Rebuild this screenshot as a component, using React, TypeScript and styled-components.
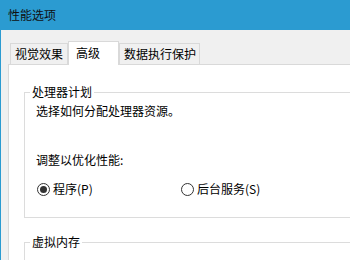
import React from "react";
import styled, { createGlobalStyle } from "styled-components";

const Global = createGlobalStyle`
  html, body { margin: 0; padding: 0; overflow: hidden; background: #f0f0f0; }
  body { font-family: "Noto Sans CJK SC", "Noto Sans", sans-serif; font-size: 12px; color: #000; }
`;

const Window = styled.div`
  width: 100%;
  height: 260px;
  overflow: hidden;
  border-left: 1px solid #2b9bd1;
  background: #f0f0f0;
  display: flex;
  flex-direction: column;
  box-sizing: border-box;
`;

const TitleBar = styled.div`
  flex: none;
  height: 30px;
  background: #2b9bd1;
  display: flex;
  align-items: center;
  padding-left: 7px;
  color: #101010;
  font-size: 12px;
  line-height: 16px;
`;

const Body = styled.div`
  padding: 11px 0 0 7px;
  display: flex;
  flex-direction: column;
  flex: 1;
  min-height: 0;
`;

const TabRow = styled.div`
  display: flex;
  align-items: flex-end;
  padding-left: 2px;
  margin-bottom: -1px;
  position: relative;
  z-index: 1;
`;

const Tab = styled.div<{ $active?: boolean; $w?: number }>`
  box-sizing: border-box;
  height: ${(p) => (p.$active ? 24 : 22)}px;
  width: ${(p) => p.$w}px;
  padding: 0 0 0 ${(p) => (p.$active ? 7 : 4)}px;
  border: 1px solid #d9d9d9;
  border-bottom: ${(p) => (p.$active ? "none" : "1px solid #d9d9d9")};
  background: ${(p) => (p.$active ? "#fff" : "#f0f0f0")};
  display: flex;
  align-items: center;
  line-height: 16px;
  padding-bottom: ${(p) => (p.$active ? 1 : 0)}px;
  white-space: nowrap;
`;

const Panel = styled.div`
  flex: 1;
  min-height: 0;
  background: #fff;
  border-top: 1px solid #d9d9d9;
  border-left: 1px solid #d9d9d9;
  padding: 19px 0 0 15px;
  display: flex;
  flex-direction: column;
`;

const Group = styled.fieldset<{ $mt?: number }>`
  margin: ${(p) => p.$mt ?? 0}px 0 0 0;
  border: 1px solid #dcdcdc;
  border-right: none;
  padding: 3px 0 20px 11px;
  min-width: 0;
  display: flex;
  flex-direction: column;
`;

const Legend = styled.legend`
  padding: 0 2px;
  margin-left: -6px;
  line-height: 16px;
`;

const Line = styled.div<{ $mt?: number }>`
  line-height: 16px;
  margin-top: ${(p) => p.$mt ?? 0}px;
`;

const RadioRow = styled.div`
  display: flex;
  align-items: center;
  margin-top: 13px;
  line-height: 16px;
`;

const RadioItem = styled.label<{ $w?: number }>`
  display: flex;
  align-items: center;
  width: ${(p) => (p.$w ? `${p.$w}px` : "auto")};
  margin-left: 1px;
`;

const Circle = styled.span<{ $on?: boolean }>`
  box-sizing: border-box;
  width: 13px;
  height: 13px;
  border-radius: 50%;
  border: 1px solid #333;
  background: #fff;
  display: flex;
  align-items: center;
  justify-content: center;
  margin-right: 3px;
  &::after {
    content: "";
    display: ${(p) => (p.$on ? "block" : "none")};
    width: 7px;
    height: 7px;
    border-radius: 50%;
    background: #333;
  }
`;

export default function App() {
  return (
    <>
      <Global />
      <Window>
        <TitleBar>性能选项</TitleBar>
        <Body>
          <TabRow>
            <Tab $w={58}>视觉效果</Tab>
            <Tab $active $w={51}>高级</Tab>
            <Tab $w={81}>数据执行保护</Tab>
          </TabRow>
          <Panel>
            <Group>
              <Legend>处理器计划</Legend>
              <Line>选择如何分配处理器资源。</Line>
              <Line $mt={33}>调整以优化性能:</Line>
              <RadioRow>
                <RadioItem $w={143}>
                  <Circle $on />
                  程序(P)
                </RadioItem>
                <RadioItem>
                  <Circle />
                  后台服务(S)
                </RadioItem>
              </RadioRow>
            </Group>
            <Group $mt={16}>
              <Legend>虚拟内存</Legend>
              <Line>&nbsp;</Line>
            </Group>
          </Panel>
        </Body>
      </Window>
    </>
  );
}
